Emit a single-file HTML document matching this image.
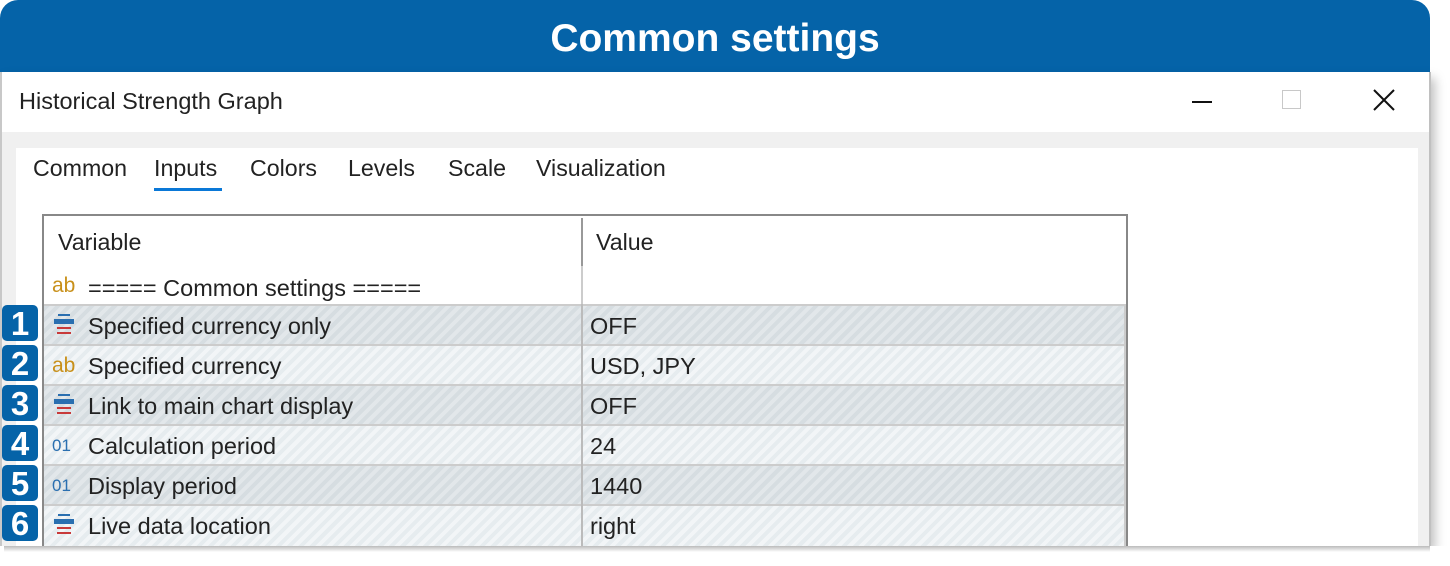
<!DOCTYPE html>
<html><head><style>
body{margin:0;width:1450px;height:566px;background:#fff;position:relative;overflow:hidden;font-family:"Liberation Sans",sans-serif}
.hdr{position:absolute;left:0;top:0;width:1430px;height:72px;background:#0563a8;border-radius:18px 18px 0 0;color:#fff;font-weight:bold;font-size:39px;text-align:center;line-height:78px}
.win{position:absolute;left:0;top:72px;width:1427px;height:474px;background:#f0f0f0;border-left:2px solid #c8c8c8;border-right:2px solid #c0c0c0;box-shadow:4px 6px 10px rgba(0,0,0,.25)}
.title{position:absolute;left:0;top:0;width:1427px;height:60px;background:#fff}
.title span{position:absolute;left:17px;top:16px;font-size:23.5px;color:#222}
.panel{position:absolute;left:14px;top:76px;width:1402px;height:398px;background:#fff}
.tab{position:absolute;font-size:23.2px;color:#222}
.tbl{position:absolute;left:42px;top:214px;width:1082px;height:340px;border:2px solid #888;border-bottom:none;background:#fff}
.row{position:absolute;left:2px;width:1080px;height:38px;font-size:23.5px;color:#222;line-height:40px}
.odd{background:repeating-linear-gradient(135deg,#d6dde1 0 4px,#e2e7ea 4px 8px)}
.even{background:repeating-linear-gradient(135deg,#e6ecef 0 4px,#f2f5f7 4px 8px)}
.row .v{position:absolute;left:44px}
.row .val{position:absolute;left:546px}
.badge{position:absolute;left:2px;width:36px;height:36px;background:#0563a8;border-radius:5px;color:#fff;font-weight:bold;font-size:33px;text-align:center;line-height:37px}
.ic{position:absolute;left:8px;top:0}
.ab{position:absolute;left:8px;color:#c8901a;font-size:21px}
.o1{position:absolute;left:8px;color:#2a6fb0;font-size:17px}
</style></head><body>
<div class="hdr">Common settings</div>
<div class="win">
<div class="title"><span>Historical Strength Graph</span>
<div style="position:absolute;left:1190px;top:29px;width:20px;height:2px;background:#111"></div>
<div style="position:absolute;left:1280px;top:18px;width:17px;height:17px;border:1px solid #c8c8c8"></div>
<svg style="position:absolute;left:1371px;top:17px" width="22" height="22"><path d="M1 1L21 21M21 1L1 21" stroke="#111" stroke-width="2"/></svg>
</div>
<div class="panel"></div>
</div>
<div class="tab" style="left:33px;top:155px">Common</div>
<div class="tab" style="left:154px;top:155px">Inputs</div>
<div style="position:absolute;left:154px;top:188px;width:68px;height:3px;background:#0a78d7"></div>
<div class="tab" style="left:250px;top:155px">Colors</div>
<div class="tab" style="left:348px;top:155px">Levels</div>
<div class="tab" style="left:448px;top:155px">Scale</div>
<div class="tab" style="left:536px;top:155px">Visualization</div>
<div class="tbl">
<div style="position:absolute;left:537px;top:2px;width:2px;height:340px;background:#ccc"></div>
<div style="position:absolute;left:537px;top:2px;width:2px;height:48px;background:#999"></div>
<div style="position:absolute;left:14px;top:13px;font-size:23.2px;color:#222">Variable</div>
<div style="position:absolute;left:552px;top:13px;font-size:23.2px;color:#222">Value</div>
<div style="position:absolute;left:8px;top:58px;color:#c8901a;font-size:21px">ab</div>
<div style="position:absolute;left:44px;top:59px;font-size:23.5px;color:#222">===== Common settings =====</div>
</div>
<div style="position:absolute;left:44px;top:304px;width:1082px;height:242px;background:#ccc"></div>
<div style="position:absolute;left:581px;top:304px;width:2px;height:242px;background:#bbb;z-index:2"></div>

<div class="row odd" style="left:44px;top:306px"><svg class="ic" width="26" height="38"><rect x="6" y="8" width="12" height="2" fill="#2a6fb0"/><rect x="2" y="13" width="20" height="5" fill="#2a6fb0"/><rect x="5" y="21" width="14" height="2" fill="#c83a3a"/><rect x="5" y="26" width="14" height="2" fill="#c83a3a"/></svg><span class="v">Specified currency only</span><span class="val">OFF</span></div>
<div class="row even" style="left:44px;top:346px"><span class="ab">ab</span><span class="v">Specified currency</span><span class="val">USD, JPY</span></div>
<div class="row odd" style="left:44px;top:386px"><svg class="ic" width="26" height="38"><rect x="6" y="8" width="12" height="2" fill="#2a6fb0"/><rect x="2" y="13" width="20" height="5" fill="#2a6fb0"/><rect x="5" y="21" width="14" height="2" fill="#c83a3a"/><rect x="5" y="26" width="14" height="2" fill="#c83a3a"/></svg><span class="v">Link to main chart display</span><span class="val">OFF</span></div>
<div class="row even" style="left:44px;top:426px"><span class="o1">01</span><span class="v">Calculation period</span><span class="val">24</span></div>
<div class="row odd" style="left:44px;top:466px"><span class="o1">01</span><span class="v">Display period</span><span class="val">1440</span></div>
<div class="row even" style="left:44px;top:506px;height:40px"><svg class="ic" width="26" height="38"><rect x="6" y="8" width="12" height="2" fill="#2a6fb0"/><rect x="2" y="13" width="20" height="5" fill="#2a6fb0"/><rect x="5" y="21" width="14" height="2" fill="#c83a3a"/><rect x="5" y="26" width="14" height="2" fill="#c83a3a"/></svg><span class="v">Live data location</span><span class="val">right</span></div>

<div class="badge" style="top:305px">1</div>
<div class="badge" style="top:345px">2</div>
<div class="badge" style="top:385px">3</div>
<div class="badge" style="top:425px">4</div>
<div class="badge" style="top:465px">5</div>
<div class="badge" style="top:505px">6</div>
<div style="position:absolute;left:0;top:546px;width:1450px;height:20px;background:#fff"></div>
<div style="position:absolute;left:4px;top:546px;width:1426px;height:6px;background:linear-gradient(#bbb,#fff)"></div>
</body></html>
